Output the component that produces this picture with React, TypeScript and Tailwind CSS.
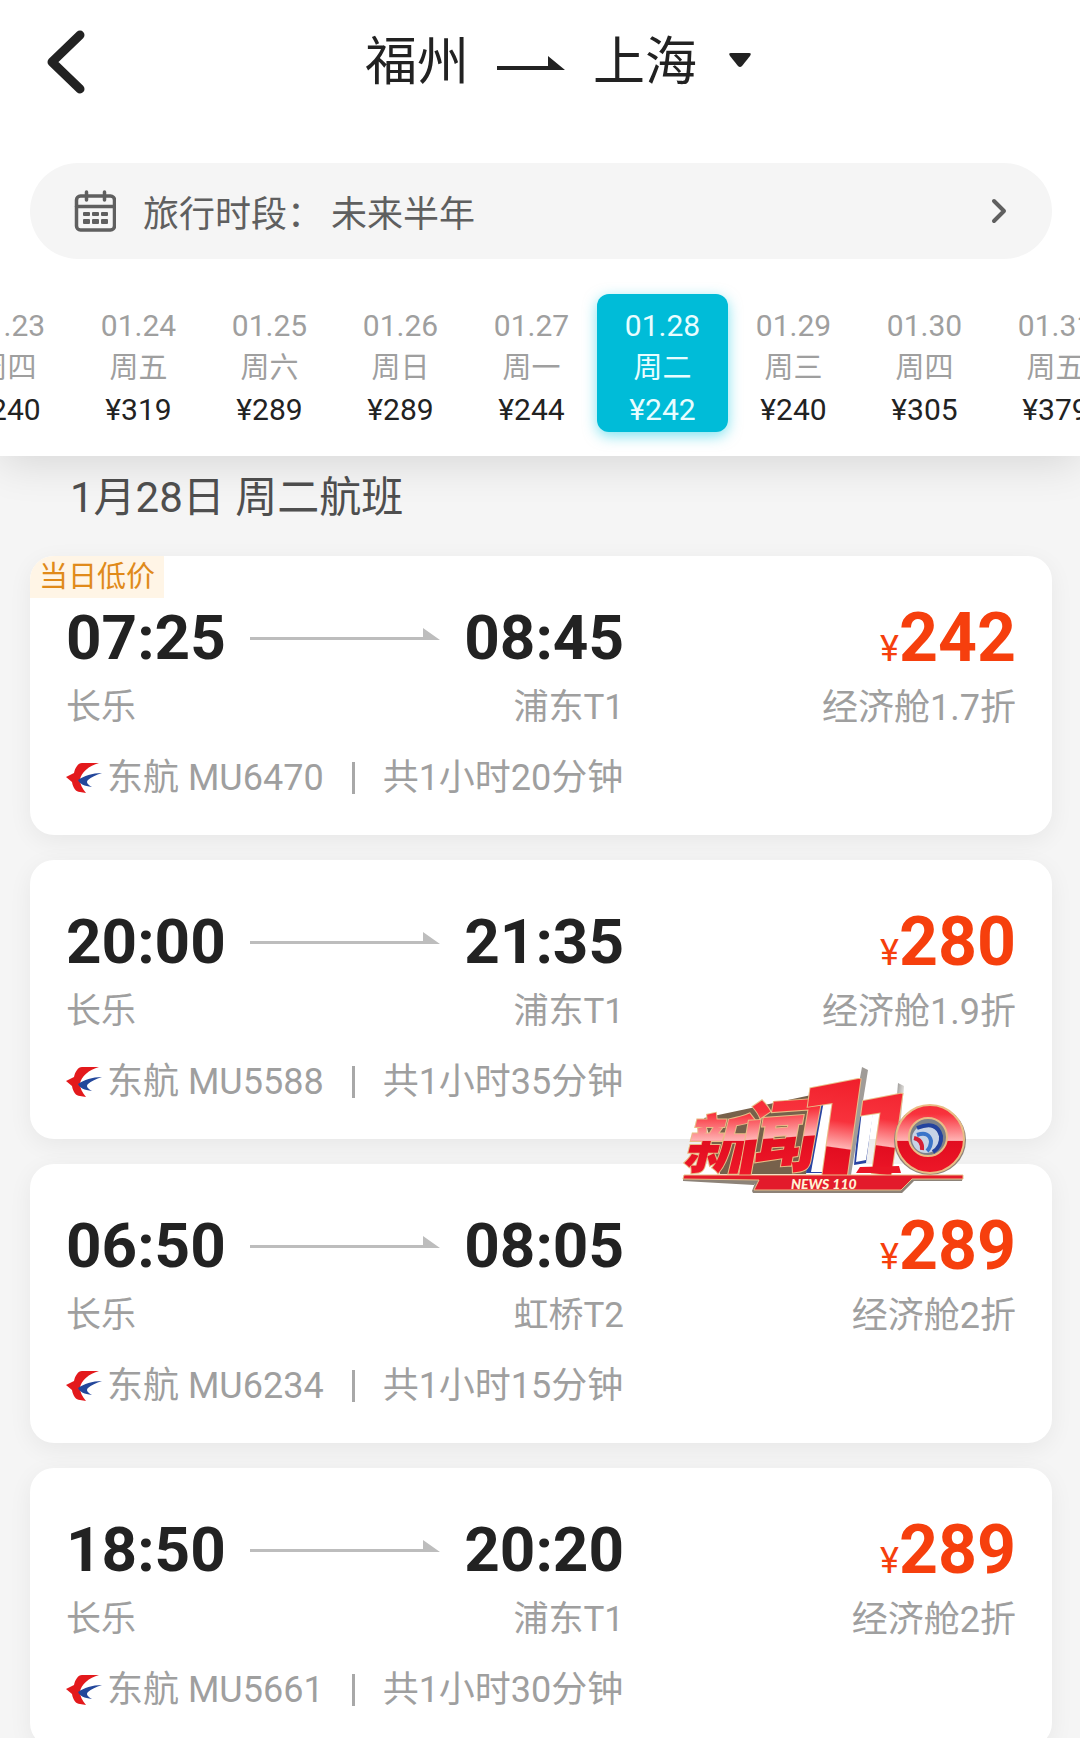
import clsx from 'clsx'

interface Day {
    date: string
    weekday: string
    price: number
}

interface Flight {
    code: string
    departure: string
    arrival: string
    from: string
    to: string
    duration: string
    price: number
    cabin: string
    lowest?: boolean
}

const days: Day[] = [
    { date: '01.23', weekday: '周四', price: 240 },
    { date: '01.24', weekday: '周五', price: 319 },
    { date: '01.25', weekday: '周六', price: 289 },
    { date: '01.26', weekday: '周日', price: 289 },
    { date: '01.27', weekday: '周一', price: 244 },
    { date: '01.28', weekday: '周二', price: 242 },
    { date: '01.29', weekday: '周三', price: 240 },
    { date: '01.30', weekday: '周四', price: 305 },
    { date: '01.31', weekday: '周五', price: 379 },
]

const flights: Flight[] = [
    {
        code: 'MU6470',
        departure: '07:25',
        arrival: '08:45',
        from: '长乐',
        to: '浦东T1',
        duration: '共1小时20分钟',
        price: 242,
        cabin: '经济舱1.7折',
        lowest: true,
    },
    {
        code: 'MU5588',
        departure: '20:00',
        arrival: '21:35',
        from: '长乐',
        to: '浦东T1',
        duration: '共1小时35分钟',
        price: 280,
        cabin: '经济舱1.9折',
    },
    {
        code: 'MU6234',
        departure: '06:50',
        arrival: '08:05',
        from: '长乐',
        to: '虹桥T2',
        duration: '共1小时15分钟',
        price: 289,
        cabin: '经济舱2折',
    },
    {
        code: 'MU5661',
        departure: '18:50',
        arrival: '20:20',
        from: '长乐',
        to: '浦东T1',
        duration: '共1小时30分钟',
        price: 289,
        cabin: '经济舱2折',
    },
]

const selectedDate = '01.28'

export default function App() {
    return (
        <div className="relative flex h-screen flex-col overflow-hidden bg-[#f5f5f5] font-['Noto_Sans_CJK_SC',sans-serif] text-[#222]">
            <header className="relative z-10 bg-white pb-6 shadow-[0_8px_40px_rgba(0,0,0,0.12)]">
                <TitleBar />
                <PeriodPicker />
                <DateStrip />
            </header>
            <main className="flex-1 pt-3 pr-[28px] pl-[30px] font-[Roboto,'Noto_Sans_CJK_SC',sans-serif]">
                <h2 className="pl-10 text-[42px] leading-[60px] text-[#4f4f4f]">
                    1月28日 周二航班
                </h2>
                <ul className="mt-7 flex flex-col gap-[25px]">
                    {flights.map((flight) => (
                        <FlightCard key={flight.code} flight={flight} />
                    ))}
                </ul>
            </main>
            <NewsLogo />
        </div>
    )
}

const TitleBar = () => (
    <div className="grid h-[116px] grid-cols-[1fr_auto_1fr] items-center px-[46px]">
        <button aria-label="返回" className="w-10 pt-2">
            <svg viewBox="0 0 40 66" className="h-[66px] w-10" fill="none">
                <path
                    d="M34 6 6 33l28 27"
                    stroke="#222"
                    strokeWidth="9"
                    strokeLinecap="round"
                    strokeLinejoin="round"
                />
            </svg>
        </button>
        <h1 className="flex items-center pl-9 text-[52px] leading-[76px]">
            <span>福州</span>
            <svg viewBox="0 0 68 16" className="mx-7 mt-3 h-4 w-[68px]">
                <path d="M0 10h51V0l17 14H0z" fill="#222" />
            </svg>
            <button className="flex items-center gap-8">
                上海
                <svg viewBox="0 0 22 15" className="mt-1 h-[15px] w-[22px]">
                    <path
                        d="M2 0h18q3 0 1 3L13 13q-2 2-4 0L1 3Q-1 0 2 0z"
                        fill="#222"
                    />
                </svg>
            </button>
        </h1>
        <span />
    </div>
)

const PeriodPicker = () => (
    <div className="pt-[47px] pr-[28px] pl-[30px]">
        <button className="flex h-24 w-full items-center rounded-full bg-[#f5f5f5] pr-[44px] pl-11 text-4xl text-[#5f5f5f]">
            <CalendarIcon />
            <span className="ml-[27px]">旅行时段：</span>
            <span className="ml-2">未来半年</span>
            <svg
                viewBox="0 0 18 28"
                className="ml-auto h-7 w-[18px]"
                fill="none"
                stroke="#5f5f5f"
                strokeWidth="4"
                strokeLinecap="round"
                strokeLinejoin="round"
            >
                <path d="m4 4 10 10L4 24" />
            </svg>
        </button>
    </div>
)

const CalendarIcon = () => (
    <svg viewBox="0 0 42 42" className="h-[42px] w-[42px]" fill="none">
        <g stroke="#5f5f5f" strokeWidth="3.5" strokeLinecap="round">
            <rect x="2.5" y="6" width="38" height="34" rx="4" />
            <path d="M2.5 16.5h38M12.5 2v8M30.5 2v8" />
        </g>
        <g fill="#5f5f5f">
            {[9, 18, 27].map((x) => (
                <g key={x}>
                    <rect x={x} y="22" width="7" height="4" rx="1" />
                    <rect x={x} y="29" width="7" height="5" rx="1" />
                </g>
            ))}
        </g>
    </svg>
)

const DateStrip = () => (
    <nav className="mt-[35px] -ml-[58px] flex font-[Roboto,'Noto_Sans_CJK_SC',sans-serif]">
        {days.map((day) => {
            const selected = day.date === selectedDate
            return (
                <button
                    key={day.date}
                    aria-pressed={selected}
                    className={clsx(
                        'flex w-[131px] shrink-0 flex-col items-center rounded-xl pt-[11px] pb-px text-[30px] leading-[42px]',
                        selected
                            ? 'bg-[#00bcd8] text-[#e8fdff] shadow-[0_4px_14px_rgba(0,200,225,0.5)]'
                            : 'text-[#9f9f9f]'
                    )}
                >
                    <span>{day.date}</span>
                    <span className="text-[29px]">{day.weekday}</span>
                    <span className={clsx(!selected && 'text-[#222]')}>
                        ¥{day.price}
                    </span>
                </button>
            )
        })}
    </nav>
)

const FlightCard = ({ flight }: { flight: Flight }) => (
    <li className="relative rounded-3xl bg-white shadow-[0_6px_24px_rgba(0,0,0,0.06)]">
        {flight.lowest && (
            <span className="absolute top-0 left-0 rounded-tl-3xl bg-[#fff5e6] px-[9px] text-[29px] leading-[42px] text-[#e08a1a]">
                当日低价
            </span>
        )}
        <a
            href="#"
            className="flex justify-between pt-[50px] pr-9 pb-[33px] pl-9 text-[36px] leading-[48px] text-[#9f9f9f]"
        >
            <div className="w-[558px]">
                <div className="flex items-center justify-between text-[62px] leading-[64px] font-bold text-[#222]">
                    <span>{flight.departure}</span>
                    <svg viewBox="0 0 190 12" className="mb-2 h-3 w-[190px]">
                        <path d="M0 9h173V0l17 12H0z" fill="#bdbdbd" />
                    </svg>
                    <span>{flight.arrival}</span>
                </div>
                <div className="mt-[14px] flex justify-between text-[35px]">
                    <span>{flight.from}</span>
                    <span>{flight.to}</span>
                </div>
                <div className="mt-[22px] flex items-center">
                    <AirlineLogo />
                    <span className="ml-[5px]">东航 {flight.code}</span>
                    <span className="mx-7 h-8 w-[3px] bg-[#a8a8a8]" />
                    <span>{flight.duration}</span>
                </div>
            </div>
            <div className="text-right">
                <div className="text-[68px] leading-[64px] font-bold text-[#f63f0d]">
                    <span className="text-[36px] leading-none font-normal">
                        ¥
                    </span>
                    {flight.price}
                </div>
                <div className="mt-[14px]">{flight.cabin}</div>
            </div>
        </a>
    </li>
)

const AirlineLogo = () => (
    <svg viewBox="0 0 36 32" className="h-8 w-9">
        <path
            d="M33 1H16c-4 0-7 5-8 10l-8 4 6 5c1 6 4 10 8 10l6 1c-4-5-6-9-6-13 1-8 9-14 19-17z"
            fill="#e3191c"
        />
        <path
            d="M36 11c-10 0-18 3-24 7 2 4 6 6 14 7-5-3-6-5-4-7 3-3 8-5 14-7z"
            fill="#23479b"
        />
    </svg>
)

// Broadcaster bug that floats over the list.
const NewsLogo = () => (
    <svg
        viewBox="0 0 310 160"
        role="img"
        aria-label="新闻110"
        className="absolute top-[1050px] right-[100px] z-20 h-40 w-[310px]"
    >
        <defs>
            <linearGradient
                id="red"
                gradientUnits="userSpaceOnUse"
                x1="0"
                y1="20"
                x2="0"
                y2="130"
            >
                <stop offset="0" stopColor="#f01f2b" />
                <stop offset="0.4" stopColor="#f8323c" />
                <stop offset="0.64" stopColor="#ffb3b3" />
                <stop offset="0.65" stopColor="#e20d20" />
                <stop offset="1" stopColor="#f01a2a" />
            </linearGradient>
            <linearGradient id="metal" x1="0" y1="0" x2="1" y2="1">
                <stop offset="0" stopColor="#6d6a68" />
                <stop offset="0.5" stopColor="#d8d6d3" />
                <stop offset="1" stopColor="#77706a" />
            </linearGradient>
        </defs>

        {/* extruded sides behind the letters */}
        <path d="M34 68 146 44l8 4-18 76H50z" fill="#77614b" />
        <path d="m150 42 14-3-10 84h-18z" fill="#2944a3" />
        <path d="m155 45 12-3-14 80h-12z" fill="#fff" />
        <path d="m190 56 14-3-8 60-12 2z" fill="#2944a3" />
        <path d="m192 60 12-2-8 52-10 2z" fill="#fff" />
        <path d="m192 17 6 3-17 105h-9z" fill="#a09c98" />
        <path d="m228 33 6 3-6 62-6 8z" fill="url(#metal)" />

        <g
            fill="url(#red)"
            stroke="#e9bd86"
            strokeWidth="2"
            paintOrder="stroke"
            fontWeight="900"
        >
            <g
                fontFamily="'Noto Sans CJK SC', sans-serif"
                fontStyle="italic"
            >
                <text x="12" y="118" fontSize="64">
                    新
                </text>
                <text x="66" y="119" fontSize="78" transform="rotate(-4 66 119)">
                    闻
                </text>
            </g>
            <g fontFamily="Roboto, sans-serif">
                <text
                    x="116"
                    y="125"
                    fontSize="148"
                    transform="rotate(8 116 125)"
                >
                    1
                </text>
                <text
                    x="174"
                    y="119"
                    fontSize="116"
                    transform="rotate(8 174 119)"
                >
                    1
                </text>
            </g>
        </g>
        <path d="m190 117 39-1 2 7h-45z" fill="#ea1626" />

        <ellipse cx="260" cy="90" rx="36" ry="35" fill="#8d8378" />
        <ellipse
            cx="260"
            cy="89"
            rx="34"
            ry="34"
            fill="url(#red)"
            stroke="#e9bd86"
            strokeWidth="2"
        />
        <ellipse
            cx="258"
            cy="87"
            rx="19"
            ry="19"
            fill="#7d8189"
            stroke="#e9bd86"
            strokeWidth="2"
        />
        <circle cx="256" cy="89" r="14" fill="#c8d3e6" />
        <g fill="none" strokeWidth="4">
            <path d="M247 78q20-8 24 8 1 10-8 16" stroke="#24439f" />
            <path d="M247 85q12-4 14 6 0 6-4 10" stroke="#3b74c9" />
            <path d="M244 88q9 2 8 12" stroke="#d51f35" />
        </g>

        <path
            d="M13 127h75l-4 8-71-4zM82 141l6-16h205l-1 6h-48l-12 12H83z"
            fill="#8d8378"
        />
        <path
            d="M14 125h279v4h-51l-11 11H84l5-10-76-1z"
            fill="#e31b2b"
            stroke="#e9bd86"
            strokeWidth="1"
        />
        <text
            x="121"
            y="139"
            fontSize="14"
            fontWeight="900"
            fontStyle="italic"
            fontFamily="Lato, sans-serif"
            fill="#fff3d6"
        >
            NEWS 110
        </text>
    </svg>
)
